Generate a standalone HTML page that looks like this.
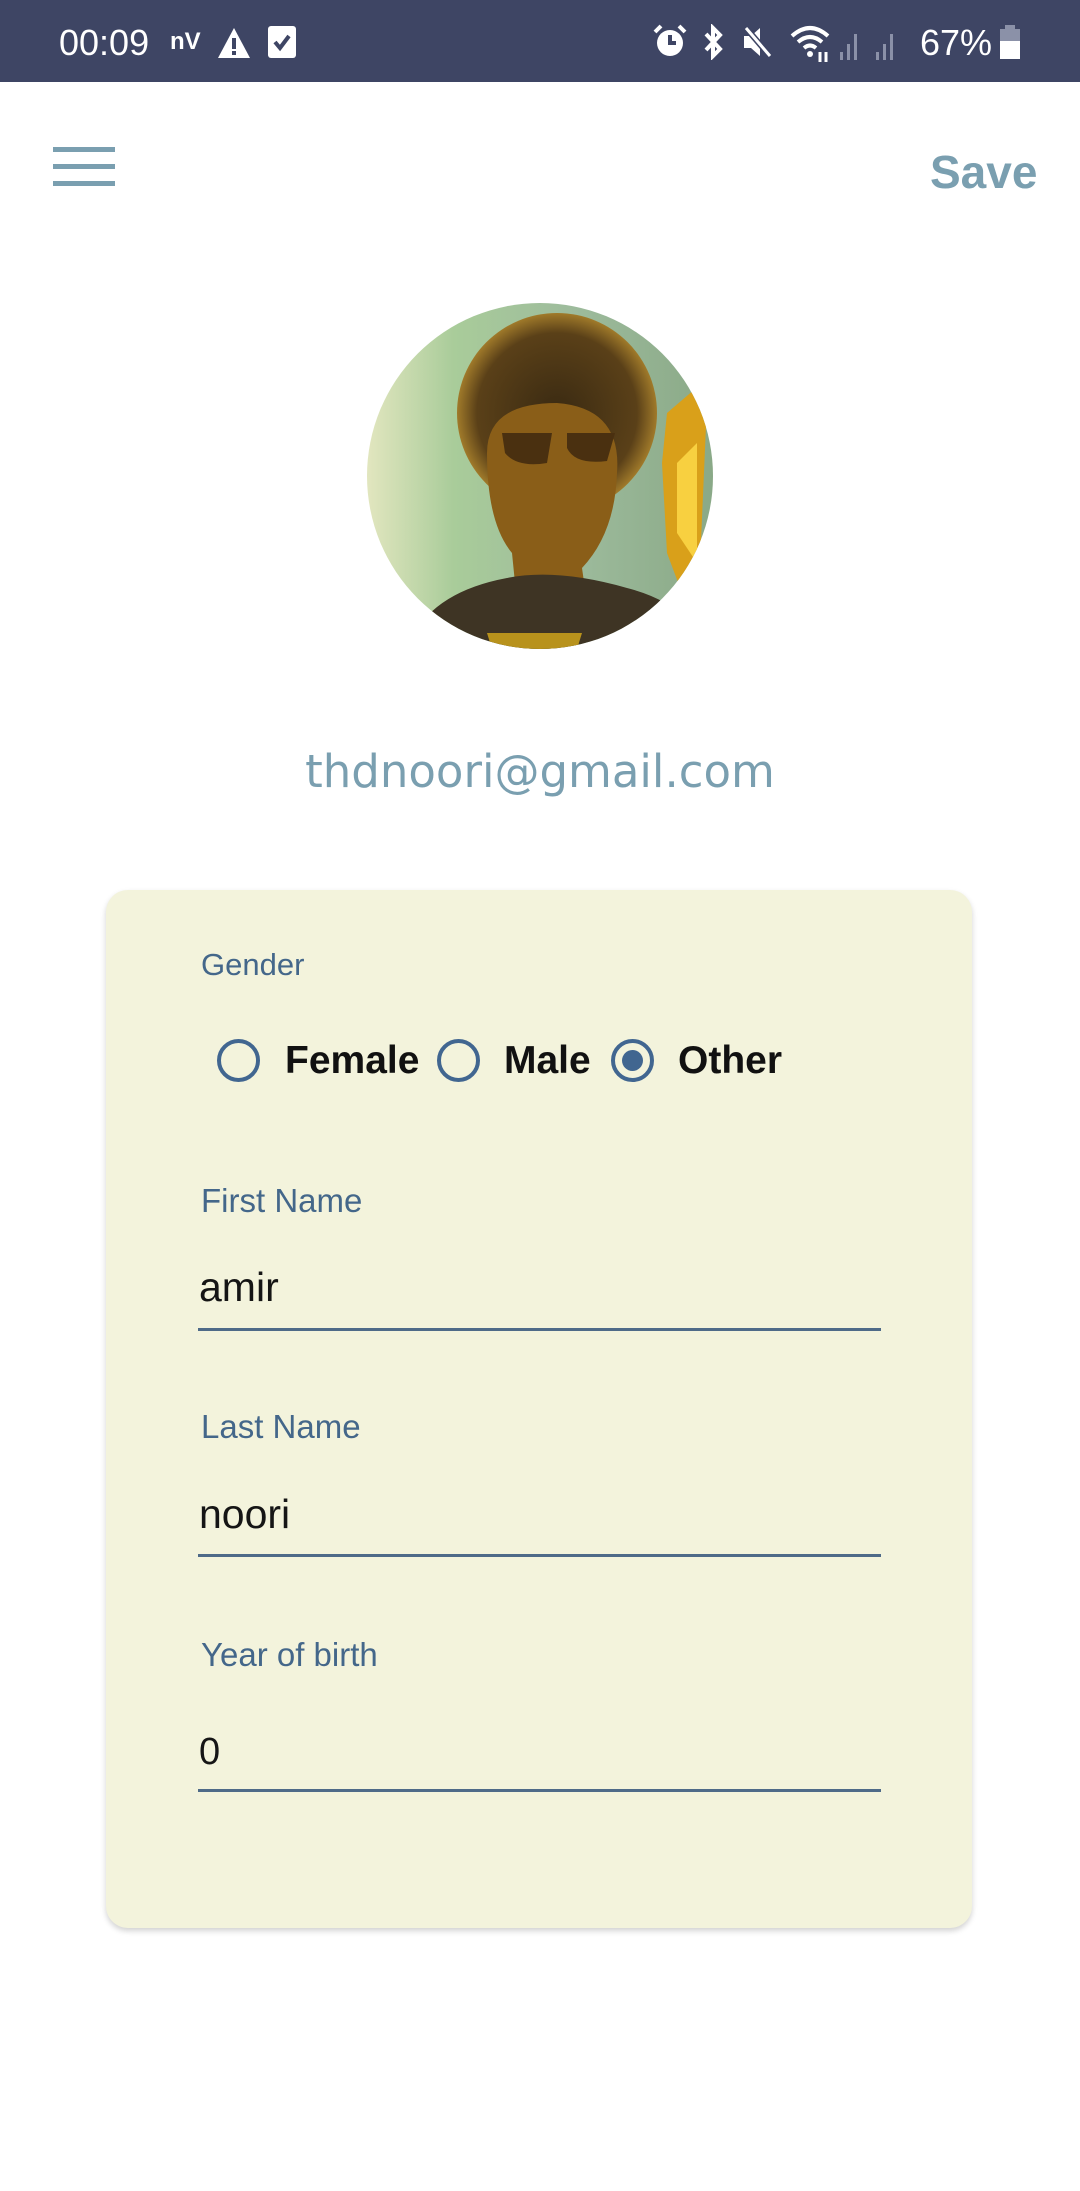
<!DOCTYPE html>
<html><head><meta charset="utf-8"><style>
html,body{margin:0;padding:0}
body{width:1080px;height:2191px;position:relative;background:#fff;font-family:"Liberation Sans",sans-serif;overflow:hidden}
.abs{position:absolute}
.sb{left:0;top:0;width:1080px;height:82px;background:#3e4564;color:#fff}
.lbl{color:#44678a;font-size:33px;left:201px;font-weight:300}
.val{color:#151515;font-size:41px;left:199px}
.line{left:198px;width:683px;height:3px;background:#4e6a88}
.rad{width:43px;height:43px;border:4px solid #416690;border-radius:50%;box-sizing:border-box}
.rt{font-size:39px;font-weight:bold;color:#111}
</style></head><body>
<div class="abs sb">
 <div class="abs" style="left:59px;top:22px;font-size:36px">00:09</div>
 <div class="abs" style="left:170px;top:28px;font-size:24px;font-weight:bold">nV</div>
 <svg class="abs" style="left:216px;top:26px" width="36" height="34"><path d="M18 2 L34 32 L2 32 Z" fill="#fff"/><rect x="16" y="12" width="4" height="11" fill="#3e4564"/><rect x="16" y="25" width="4" height="4" fill="#3e4564"/></svg>
 <svg class="abs" style="left:268px;top:26px" width="28" height="32"><rect x="0" y="0" width="28" height="32" rx="3" fill="#fff"/><path d="M7 16 L12 22 L21 10" stroke="#3e4564" stroke-width="4" fill="none"/></svg>
 <svg class="abs" style="left:652px;top:24px" width="36" height="36"><circle cx="18" cy="19" r="13" fill="#fff"/><path d="M18 11 V19 H24" stroke="#3e4564" stroke-width="4" fill="none"/><path d="M3 8 L9 2 M33 8 L27 2" stroke="#fff" stroke-width="4"/></svg>
 <svg class="abs" style="left:700px;top:24px" width="28" height="36"><path d="M6 10 L20 25 L13 32 V4 L20 11 L6 26" stroke="#fff" stroke-width="4" fill="none"/></svg>
 <svg class="abs" style="left:740px;top:24px" width="34" height="36"><path d="M4 12 H11 L20 4 V32 L11 24 H4 Z" fill="#fff"/><path d="M6 4 L30 32" stroke="#3e4564" stroke-width="6"/><path d="M6 4 L30 32" stroke="#fff" stroke-width="3"/></svg>
 <svg class="abs" style="left:790px;top:24px" width="44" height="40"><path d="M2 12 Q20 -4 38 12 M8 18 Q20 8 32 18 M14 24 Q20 19 26 24" stroke="#fff" stroke-width="4" fill="none"/><circle cx="20" cy="30" r="3" fill="#fff"/><path d="M30 28 V38 M36 28 V38" stroke="#fff" stroke-width="3"/></svg>
 <svg class="abs" style="left:838px;top:28px" width="70" height="34" fill="#8b91a8"><rect x="2" y="24" width="3" height="8"/><rect x="9" y="16" width="3" height="16"/><rect x="16" y="6" width="3" height="26"/><rect x="38" y="24" width="3" height="8"/><rect x="45" y="16" width="3" height="16"/><rect x="52" y="6" width="3" height="26"/></svg>
 <div class="abs" style="left:920px;top:22px;font-size:36px">67%</div>
 <svg class="abs" style="left:998px;top:25px" width="24" height="36"><rect x="7" y="0" width="10" height="5" fill="#8b91a8"/><rect x="2" y="4" width="20" height="12" fill="#8b91a8"/><rect x="2" y="16" width="20" height="18" fill="#fff"/></svg>
</div>
<div class="abs" style="left:53px;top:147px;width:62px;height:5px;background:#7a9fb0"></div>
<div class="abs" style="left:53px;top:164px;width:62px;height:5px;background:#7a9fb0"></div>
<div class="abs" style="left:53px;top:181px;width:62px;height:5px;background:#7a9fb0"></div>
<div class="abs" style="left:930px;top:145px;font-size:46px;font-weight:bold;color:#7a9fb0">Save</div>
<svg class="abs" style="left:367px;top:303px" width="346" height="346">
 <defs><clipPath id="c"><circle cx="173" cy="173" r="173"/></clipPath>
 <linearGradient id="bg" x1="0" x2="1"><stop offset="0" stop-color="#e2e6bf"/><stop offset="0.25" stop-color="#a9cc9a"/><stop offset="0.6" stop-color="#9dbb9c"/><stop offset="1" stop-color="#8aa987"/></linearGradient>
 <radialGradient id="hair"><stop offset="0" stop-color="#3a2a12"/><stop offset="0.8" stop-color="#5a4018"/><stop offset="1" stop-color="#a07a2a"/></radialGradient></defs>
 <g clip-path="url(#c)">
  <rect width="346" height="346" fill="url(#bg)"/>
  <ellipse cx="190" cy="110" rx="100" ry="100" fill="url(#hair)"/>
  <path d="M120 150 Q120 100 190 100 Q255 105 250 170 Q248 230 215 265 L220 300 L150 300 L145 250 Q120 220 120 150Z" fill="#8a5e18"/>
  <path d="M135 130 H185 L180 160 Q150 165 138 150Z M200 130 H248 L240 158 Q208 162 200 145Z" fill="#4a3010"/>
  <path d="M40 346 Q60 290 140 275 Q190 265 260 285 Q320 300 340 346Z" fill="#3e3424"/>
  <path d="M120 330 L215 330 L210 346 H125Z" fill="#b8921c"/>
  <path d="M300 110 L335 80 L340 100 L330 330 L300 250 L295 160Z" fill="#d9a01a"/>
  <path d="M310 160 L330 140 L330 260 L310 230Z" fill="#f8d040"/>
 </g>
</svg>
<div class="abs" style="left:0;width:1080px;top:745px;text-align:center;font-size:45px;color:#7a9fb0;font-family:'DejaVu Sans','Liberation Sans',sans-serif">thdnoori@gmail.com</div>
<div class="abs" style="left:106px;top:890px;width:866px;height:1038px;background:#f3f3dc;border-radius:22px;box-shadow:0 3px 6px rgba(0,0,0,0.18)"></div>
<div class="abs lbl" style="top:947px;font-size:31px">Gender</div>
<div class="abs rad" style="left:217px;top:1039px"></div>
<div class="abs rt" style="left:285px;top:1039px">Female</div>
<div class="abs rad" style="left:437px;top:1039px"></div>
<div class="abs rt" style="left:504px;top:1039px">Male</div>
<div class="abs rad" style="left:611px;top:1039px"></div>
<div class="abs" style="left:622px;top:1050px;width:21px;height:21px;border-radius:50%;background:#416690"></div>
<div class="abs rt" style="left:678px;top:1039px">Other</div>
<div class="abs lbl" style="top:1182px">First Name</div>
<div class="abs val" style="top:1264px">amir</div>
<div class="abs line" style="top:1328px"></div>
<div class="abs lbl" style="top:1408px">Last Name</div>
<div class="abs val" style="top:1491px">noori</div>
<div class="abs line" style="top:1554px"></div>
<div class="abs lbl" style="top:1636px">Year of birth</div>
<div class="abs val" style="top:1731px;font-size:38px">0</div>
<div class="abs line" style="top:1789px"></div>
</body></html>
